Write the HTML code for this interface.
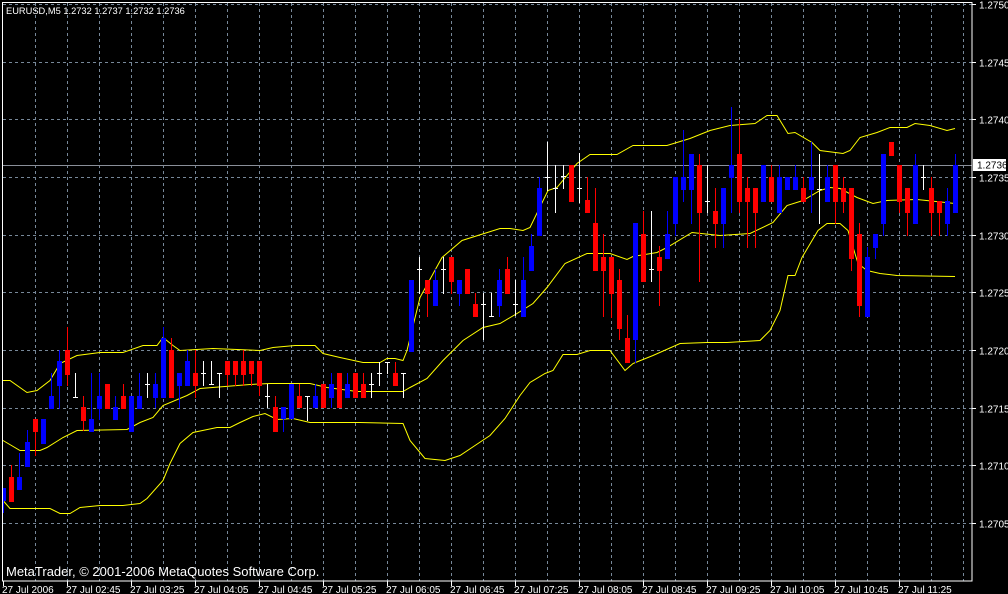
<!DOCTYPE html>
<html><head><meta charset="utf-8">
<style>
html,body{margin:0;padding:0;background:#000;width:1008px;height:594px;overflow:hidden}
svg{display:block}
text{font-family:"Liberation Sans",sans-serif;fill:#fff}
</style></head>
<body>
<svg id="s" width="1008" height="594" viewBox="0 0 1008 594" shape-rendering="crispEdges">
<rect width="1008" height="594" fill="#000"/>
<g id="grid" stroke="#778899" stroke-width="1" stroke-dasharray="3,3"></g>
<line x1="3" y1="165.5" x2="972" y2="165.5" stroke="#8a8f99"/>
<g id="bands" fill="none" stroke="#ffff00" stroke-width="1" shape-rendering="auto"></g>
<g id="candles"></g>
<rect x="2.5" y="2.5" width="969.5" height="578.5" fill="none" stroke="#fff"/>
<g id="axis"></g>
<text x="6" y="14" font-size="9.3">EURUSD,M5  1.2732 1.2737 1.2732 1.2736</text>
<text x="6" y="576" font-size="13">MetaTrader, © 2001-2006 MetaQuotes Software Corp.</text>
<rect x="973" y="159" width="33" height="12" fill="#fff"/>
<text x="977" y="168.5" font-size="10" style="fill:#000">1.2736</text>
</svg>
<script>
var NS="http://www.w3.org/2000/svg";
function el(p,t,a,txt){var e=document.createElementNS(NS,t);for(var k in a)e.setAttribute(k,a[k]);if(txt)e.textContent=txt;p.appendChild(e);return e;}
var grid=document.getElementById('grid'),axis=document.getElementById('axis'),cg=document.getElementById('candles'),bg=document.getElementById('bands');
var ys=[];for(var i=0;i<10;i++)ys.push(Math.round(4+57.67*i)+0.5);
for(var k=0;k<30;k++){var x=35+32*k+0.5;el(grid,'line',{x1:x,y1:3,x2:x,y2:581});}
ys.forEach(function(y,i){el(grid,'line',{x1:3,y1:y,x2:972,y2:y});
 el(axis,'line',{x1:972,y1:y,x2:976,y2:y,stroke:'#fff'});
 el(axis,'text',{x:979,y:y+4,'font-size':10},(1.2750-0.0005*i).toFixed(4));});
var tl=["27 Jul 2006","27 Jul 02:45","27 Jul 03:25","27 Jul 04:05","27 Jul 04:45","27 Jul 05:25","27 Jul 06:05","27 Jul 06:45","27 Jul 07:25","27 Jul 08:05","27 Jul 08:45","27 Jul 09:25","27 Jul 10:05","27 Jul 10:45","27 Jul 11:25"];
tl.forEach(function(t,i){var x=3+64*i+0.5;el(axis,'line',{x1:x,y1:581,x2:x,y2:586,stroke:'#fff'});el(axis,'text',{x:x-1.5,y:593,'font-size':10},t);});
var D=[["b",488,500,488,512],["r",477,501,465,501],["b",477,489,453,489],["b",442,466,430,466],["r",419,431,419,455],["b",419,443],["b",396,408,373,408],["b",361,385,350,408],["r",350,374,327,385],["w",373,397,397],
["r",407,420,396,430],["b",419,431,373,431],["b",396,408,373,419],["r",384,408],["b",407,419,396,419],["r",396,408,384,408],["b",396,431],["b",396,408,373,408],["w",373,397,384],["b",384,397,373,407],
["b",338,397,327,397],["r",350,397,338,397],["b",373,385,373,407],["b",361,385,350,385],["r",373,385,350,397],["w",361,385,373],["w",361,384,384],["w",373,397,373],["r",361,374,361,385],["r",361,374,361,385],
["r",361,374,350,385],["r",361,373,361,385],["r",361,385,361,395],["w",384,407,396],["r",407,431,396,431],["b",407,418,407,431],["b",384,418],["r",396,407,384,407],["w",396,420,396],["b",396,407,384,407],
["r",384,407],["b",384,397,373,407],["r",373,407],["b",384,397,373,397],["r",373,397],["r",384,397,373,397],["w",373,397,384],["w",362,385,373],["w",362,373,362],["r",373,385,362,385],
["w",373,397,373],["b",280,351],["w",257,293,269],["r",280,293,280,316],["b",280,305,269,305],["w",257,293,269],["r",257,281,257,293],["b",280,293,280,305],["r",269,293],["r",304,316,293,316],
["w",293,339,304],["w",293,316,316],["b",280,305,269,316],["r",269,293,257,293],["w",280,315,304],["b",280,316,257,316],["b",246,270,234,270],["b",188,235,177,235],["w",142,190,177],["w",165,212,188],
["w",165,188,176],["r",165,201],["w",153,202,188],["r",200,212,177,212],["r",223,270,188,270],["r",257,270,234,316],["r",257,293,257,317],["r",280,328,269,339],["r",338,362,315,362],["b",223,339,223,362],
["r",234,281,211,281],["w",211,281,269],["r",257,270,246,305],["b",234,258,211,258],["b",177,223,177,235],["b",177,189,130,201],["b",154,189,154,223],["r",165,212,154,281],["w",165,212,201],["r",211,223,188,247],
["b",188,223,188,247],["b",165,177,107,212],["r",154,201,119,212],["r",188,201,177,247],["r",188,212,188,247],["b",165,201],["r",177,201,165,201],["b",177,212,165,212],["b",177,189],["b",177,189,165,189],
["r",188,201,177,201],["b",177,189,142,212],["w",154,223,189],["b",177,201,165,201],["r",165,201,165,223],["r",188,201,177,212],["r",188,258,188,270],["r",234,305,223,316],["b",257,316,247,316],["b",234,247,234,258],
["b",154,223,154,235],["r",142,155],["r",165,201,165,212],["r",188,212,188,235],["b",165,223,154,223],["w",165,189,177],["r",188,212,177,235],["r",201,212,201,235],["b",201,223,188,235],["b",165,212,154,212]];
D.forEach(function(d,k){var cx=3+8*k;var t=d[0];
 if(t==="w"){el(cg,'rect',{x:cx,y:d[1],width:1,height:d[2]-d[1]+1,fill:'#fff'});el(cg,'rect',{x:Math.max(cx-2,3),y:d[3],width:5,height:1,fill:'#fff'});return;}
 var c=t==="b"?"#0000ff":"#ff0000";var wt=d.length>3?d[3]:d[1],wb=d.length>4?d[4]:d[2];
 el(cg,'rect',{x:cx,y:wt,width:1,height:wb-wt+1,fill:c});
 var x0=Math.max(cx-2,3);el(cg,'rect',{x:x0,y:d[1],width:cx+3-x0,height:d[2]-d[1]+1,fill:c});});
var U=[3,380,10,380,27,392,37,390,50,380,60,363,77,355,100,352,123,352,143,345,157,345,163,337,173,345,180,350,213,348,260,350,273,347,295,345,315,345,323,353,340,357,363,362,380,362,387,358,395,358,403,360,407,350,420,297,442,257,462,240,500,228,510,228,523,230,530,227,548,190,557,187,577,163,590,154,617,154,633,145,647,145,667,145,690,138,710,130,730,125,755,123,767,115,777,115,788,133,795,132,812,142,820,150,843,153,850,150,860,137,877,132,890,127,907,127,915,123,930,125,947,130,955,128];
var M=[3,440,20,450,40,450,47,447,63,437,77,430,127,429,140,422,153,417,163,405,187,395,200,388,250,384,270,383,310,383,327,387,357,391,403,391,410,387,427,378,443,360,463,340,483,327,500,323,517,313,533,303,547,287,565,263,587,253,610,253,627,259,633,256,657,252,667,247,692,232,720,235,750,233,773,222,787,205,803,200,820,190,830,187,840,188,857,197,873,203,887,200,917,199,955,203];
var L=[3,500,10,508,50,508,60,513,70,513,80,507,100,505,123,505,140,503,147,498,163,480,170,463,180,443,193,432,217,427,230,427,240,422,253,416,265,413,277,419,293,418,310,422,360,422,403,423,410,440,425,458,445,460,460,455,475,445,490,435,505,418,520,395,530,382,545,373,553,370,563,354,577,354,590,350,610,350,625,370,633,363,653,355,680,343,707,342,727,342,760,340,770,330,780,310,788,275,795,275,802,257,818,230,827,223,840,223,848,230,858,263,867,270,880,273,897,275,955,276];
[U,M,L].forEach(function(a){var p=[];for(var i=0;i<a.length;i+=2)p.push(a[i]+","+(a[i+1]+0.5));el(bg,'polyline',{points:p.join(" ")});});
</script>
</body></html>
